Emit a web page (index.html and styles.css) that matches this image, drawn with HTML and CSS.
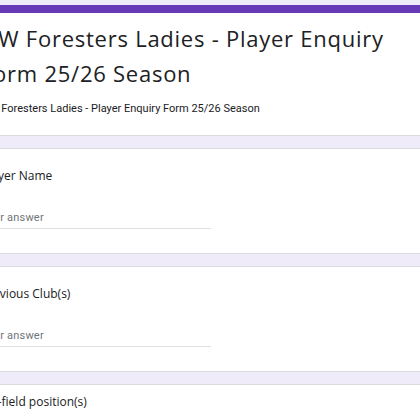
FILE: index.html
```html
<!DOCTYPE html>
<html lang="en">
<head>
  <meta charset="UTF-8" />
  <meta name="viewport" content="width=device-width, initial-scale=1.0"/>
  <title>NW Foresters Ladies - Player Enquiry Form 25/26 Season</title>
  <link rel="stylesheet" href="styles.css">
</head>
<body>

  <main class="form">
    <section class="card card-header">
      <h1 class="form-title">NW Foresters Ladies - Player Enquiry Form 25/26 Season</h1>
      <p class="form-desc">NW Foresters Ladies - Player Enquiry Form 25/26 Season</p>
    </section>

    <section class="card question">
      <div class="q-title">Player Name</div>
      <input class="answer" type="text" placeholder="Your answer" />
    </section>

    <section class="card question">
      <div class="q-title">Previous Club(s)</div>
      <input class="answer" type="text" placeholder="Your answer" />
    </section>

    <section class="card question question-tight">
      <div class="q-title">On-field position(s)</div>
      <input class="answer" type="text" placeholder="Your answer" />
    </section>
  </main>

</body>
</html>
```

FILE: styles.css
```css
body {
  font-family: Roboto, 'Liberation Sans', sans-serif;
  background: #f0ebf8;
  color: #202124;
  margin: 0;
  padding: 5px 0 0 0;
  overflow: hidden;
}
.form {
  display: flex;
  flex-direction: column;
  gap: 12px;
  width: 520px;
  margin-left: -44px;
}
.card {
  background: white;
  border: 1px solid #dadce0;
  border-radius: 8px;
  padding: 19px 24px 24px 24px;
}
.card-header {
  border-top: 8px solid #673ab7;
  padding-top: 8px;
  padding-bottom: 19px;
}
.form-title {
  font-family: 'Open Sans', Roboto, sans-serif;
  font-size: 22px;
  font-weight: 400;
  line-height: 35px;
  letter-spacing: 0.75px;
  margin: 0;
  width: 420px;
}
.form-desc {
  font-size: 11px;
  line-height: 15px;
  margin: 10px 0 0 0;
}
.q-title {
  font-family: 'Open Sans', Roboto, sans-serif;
  font-size: 12px;
  line-height: 16px;
  margin-bottom: 26px;
}
.question-tight {
  padding-top: 9px;
}
.answer {
  display: block;
  width: 230px;
  font-family: Roboto, 'Liberation Sans', sans-serif;
  font-size: 11px;
  line-height: 15px;
  letter-spacing: 0.2px;
  padding: 0 0 3px 0;
  margin: 0;
  border: none;
  border-bottom: 1px solid #e0e0e0;
  outline: none;
  background: transparent;
}
.answer::placeholder {
  color: #70757a;
}
```
